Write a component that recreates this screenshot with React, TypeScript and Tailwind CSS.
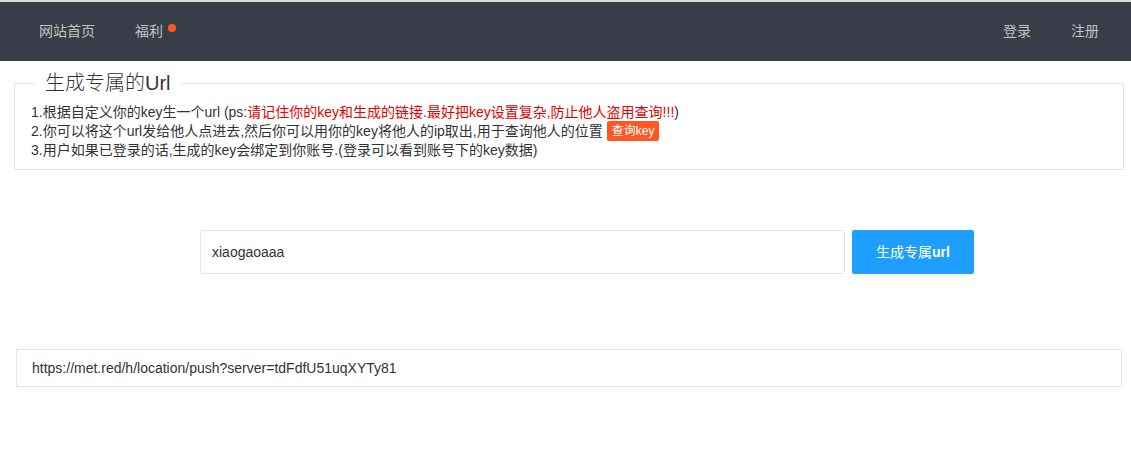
import React, { useState } from 'react';

const App = () => {
  const [key, setKey] = useState('xiaogaoaaa');
  const font = { fontFamily: '"Liberation Sans", "Noto Sans CJK SC", sans-serif' };

  return (
    <div className="min-h-screen w-[1131px] bg-white text-[14px] text-[#333]" style={font}>
      {/* top strip + header */}
      <div className="h-[2px] bg-[#d9d9d9]" />
      <div className="flex h-[59px] items-center justify-between bg-[#393d49] text-[14px] text-[#c2c2c2]">
        <div className="flex items-center pl-[39px]">
          <a className="mr-[40px]">网站首页</a>
          <a className="relative">
            福利
            <span className="absolute left-[33px] top-[3px] h-[8px] w-[8px] rounded-full bg-[#ff5722]" />
          </a>
        </div>
        <div className="flex items-center gap-[40px] pr-[32px]">
          <a>登录</a>
          <a>注册</a>
        </div>
      </div>

      {/* Fieldset */}
      <fieldset className="mx-[14px] mt-[10px] w-[1110px] border border-[#e6e6e6] px-[16px] pb-[10px] pt-[8px]">
        <legend className="ml-[4px] px-[10px] text-[20px] font-light leading-[24px] text-[#333]">
          生成专属的Url
        </legend>
        <div className="leading-[18px]">
          1.根据自定义你的key生一个url (ps:
          <span className="text-[#e60000]">请记住你的key和生成的链接.最好把key设置复杂,防止他人盗用查询!!!</span>)
        </div>
        <div className="flex h-[20px] items-center">
          2.你可以将这个url发给他人点进去,然后你可以用你的key将他人的ip取出,用于查询他人的位置
          <span className="ml-[4px] inline-flex h-[20px] items-center rounded-[2px] bg-[#ff5722] px-[5px] text-[12px] text-white">
            查询key
          </span>
        </div>
        <div className="leading-[18px]">
          3.用户如果已登录的话,生成的key会绑定到你账号.(登录可以看到账号下的key数据)
        </div>
      </fieldset>

      {/* Input row */}
      <div className="mt-[60px] flex pl-[200px]">
        <input
          value={key}
          onChange={e => setKey(e.target.value)}
          className="h-[44px] w-[645px] rounded-[2px] border border-[#e6e6e6] px-[11px] text-[14px] text-[#333] outline-none"
          style={font}
        />
        <button className="ml-[7px] h-[44px] w-[122px] rounded-[2px] bg-[#1e9fff] text-[14px] text-white">
          生成专属<b>url</b>
        </button>
      </div>

      {/* Result */}
      <div className="ml-[16px] mt-[75px] flex h-[38px] w-[1106px] items-center border border-[#e6e6e6] px-[15px]">
        https://met.red/h/location/push?server=tdFdfU51uqXYTy81
      </div>
    </div>
  );
};

export default App;
